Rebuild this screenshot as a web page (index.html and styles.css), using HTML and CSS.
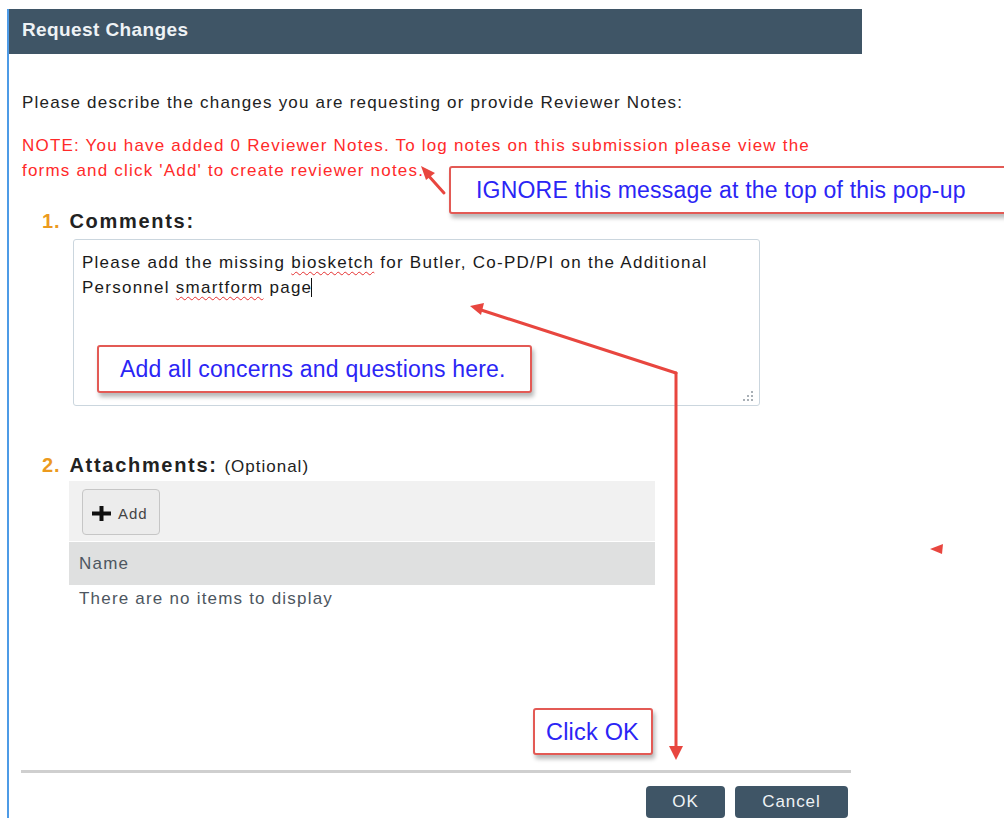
FILE: index.html
```html
<!DOCTYPE html>
<html lang="en">
<head>
<meta charset="utf-8">
<title>Request Changes</title>
<link rel="stylesheet" href="styles.css">
</head>
<body>
<div class="page">
  <div class="dialog">
    <div class="dialog-header">Request Changes</div>
    <div class="dialog-body">
      <p class="intro">Please describe the changes you are requesting or provide Reviewer Notes:</p>
      <p class="note">NOTE: You have added 0 Reviewer Notes. To log notes on this submission please view the<br>forms and click 'Add' to create reviewer notes.</p>

      <div class="field">
        <div class="field-label"><span class="num">1.</span> <b>Comments:</b></div>
        <div class="comment-box">
          <p>Please add the missing <span class="misspelled">biosketch</span> for Butler, Co-PD/PI on the Additional<br>Personnel <span class="misspelled">smartform</span> page<span class="caret"></span></p>
          <svg class="grip" width="10" height="10" viewBox="0 0 10 10">
            <g fill="#a9b0b6">
              <rect x="8" y="0" width="2" height="2"/>
              <rect x="4" y="4" width="2" height="2"/><rect x="8" y="4" width="2" height="2"/>
              <rect x="0" y="8" width="2" height="2"/><rect x="4" y="8" width="2" height="2"/><rect x="8" y="8" width="2" height="2"/>
            </g>
          </svg>
        </div>
      </div>

      <div class="field attach">
        <div class="field-label"><span class="num">2.</span> <b>Attachments:</b> <span class="optional">(Optional)</span></div>
        <div class="grid">
          <div class="grid-toolbar">
            <button class="add-btn" type="button">
              <svg width="19" height="15" viewBox="0 0 19 15"><path d="M7.5 0h4v5.5H19v4h-7.5V15h-4V9.5H0v-4h7.5z" fill="#111"/></svg>
              <span>Add</span>
            </button>
          </div>
          <div class="grid-head">Name</div>
          <div class="grid-empty">There are no items to display</div>
        </div>
      </div>
    </div>
    <div class="dialog-footer">
      <button class="btn" type="button">OK</button>
      <button class="btn btn-cancel" type="button">Cancel</button>
    </div>
  </div>

  <!-- annotation layer -->
  <div class="callout callout-ignore">IGNORE this message at the top of this pop-up</div>
  <div class="callout callout-add">Add all concerns and questions here.</div>
  <div class="callout callout-ok">Click OK</div>
  <svg class="arrows" width="1004" height="818" viewBox="0 0 1004 818">
    <g stroke="#e8463f" stroke-width="3" fill="none" stroke-linecap="round">
      <line x1="444" y1="193" x2="427" y2="174"/>
      <polyline points="676,373 478,309"/>
      <line x1="676" y1="373" x2="676" y2="748"/>
    </g>
    <g fill="#e8463f">
      <polygon points="421,166 435,173 426,180"/>
      <polygon points="470,306 484,303 481,315"/>
      <polygon points="669,746 683,746 676,760"/>
      <polygon points="930,549 943,544 942,554"/>
    </g>
  </svg>
</div>
</body>
</html>
```

FILE: styles.css
```css
* { box-sizing: border-box; }

html, body {
  margin: 0;
  padding: 0;
  background: #fff;
}

body {
  font-family: "Liberation Sans", Arial, sans-serif;
  color: #222;
  width: 1004px;
  height: 818px;
  overflow: hidden;
  letter-spacing: 1.2px;
}

.page {
  position: relative;
  width: 1004px;
  height: 818px;
  padding: 9px 0 0 7px;
}

.dialog {
  width: 855px;
  height: 838px;
  border-left: 2px solid #4e9be6;
  display: flex;
  flex-direction: column;
}

.dialog-header {
  height: 45px;
  background: #3f5566;
  color: #eef2f5;
  font-weight: bold;
  font-size: 19px;
  letter-spacing: 0.4px;
  line-height: 42px;
  padding-left: 13px;
}

.dialog-body {
  flex: 1;
  padding: 37px 0 0 13px;
}

.intro {
  margin: 0;
  font-size: 17px;
  line-height: 24px;
  color: #222;
}

.note {
  margin: 18px 0 0;
  font-size: 17px;
  line-height: 25px;
  color: #ff2a2a;
}

.field {
  margin: 26px 0 0 20px;
}

.field-label {
  font-size: 20px;
  line-height: 24px;
  color: #222;
}

.field-label .num {
  color: #ec9a1e;
  font-weight: bold;
  letter-spacing: 1px;
}

.field-label b {
  margin-left: 2px;
  letter-spacing: 1.7px;
}

.optional {
  font-size: 17px;
  letter-spacing: 1px;
}

.comment-box {
  position: relative;
  margin: 6px 0 0 31px;
  width: 687px;
  height: 167px;
  border: 1px solid #cbd6de;
  border-radius: 3px;
  padding: 10px 8px;
}

.comment-box p {
  margin: 0;
  font-size: 17px;
  letter-spacing: 1.25px;
  line-height: 25px;
  color: #1a1a1a;
}

.misspelled {
  text-decoration: underline wavy #e53030;
  text-decoration-thickness: 1px;
  text-underline-offset: 3px;
}

.caret {
  display: inline-block;
  width: 1px;
  height: 19px;
  background: #111;
  vertical-align: -4px;
  margin-left: -1px;
}

.grip {
  position: absolute;
  right: 6px;
  bottom: 4px;
}

.attach {
  margin-top: 47px;
}

.grid {
  margin: 2px 0 0 27px;
  width: 586px;
}

.grid-toolbar {
  background: #f1f1f1;
  height: 60px;
  padding: 8px 0 0 13px;
}

.add-btn {
  display: flex;
  align-items: center;
  gap: 7px;
  height: 46px;
  width: 78px;
  padding: 3px 0 0 9px;
  background: #ececec;
  border: 1px solid #c6c6c6;
  border-radius: 4px;
  font-family: "Liberation Sans", Arial, sans-serif;
  font-size: 15px;
  letter-spacing: 1px;
  color: #444;
}

.grid-head {
  margin-top: 1px;
  background: #dfe0e0;
  height: 43px;
  line-height: 43px;
  padding-left: 10px;
  font-size: 17px;
  color: #4d5660;
}

.grid-empty {
  padding: 3px 0 0 10px;
  line-height: 22px;
  font-size: 17px;
  color: #4d5660;
}

.dialog-footer {
  margin: 0 0 0 12px;
  width: 830px;
  height: 77px;
  border-top: 3px solid #cfcfcf;
  display: flex;
  justify-content: flex-end;
  align-items: flex-start;
  gap: 10px;
  padding: 13px 3px 0 0;
}

.btn {
  height: 32px;
  min-width: 79px;
  padding: 0 16px;
  background: #3f5566;
  color: #eef2f5;
  border: none;
  border-radius: 4px;
  font-family: "Liberation Sans", Arial, sans-serif;
  font-size: 17px;
  letter-spacing: 0.9px;
}

.btn-cancel {
  min-width: 113px;
}

.callout {
  position: absolute;
  background: #fff;
  border: 2px solid #e35a55;
  border-radius: 3px;
  box-shadow: 2px 4px 4px rgba(0, 0, 0, 0.28);
  color: #2b25f5;
  font-size: 23px;
  letter-spacing: 0.2px;
  line-height: 44px;
}

.callout-ignore {
  left: 449px;
  top: 166px;
  width: 570px;
  height: 48px;
  padding-left: 25px;
}

.callout-add {
  left: 97px;
  top: 345px;
  width: 435px;
  height: 48px;
  padding-left: 21px;
}

.callout-ok {
  left: 533px;
  top: 708px;
  width: 120px;
  height: 47px;
  padding-left: 11px;
  font-size: 23.5px;
}

.arrows {
  position: absolute;
  left: 0;
  top: 0;
  pointer-events: none;
}
```
